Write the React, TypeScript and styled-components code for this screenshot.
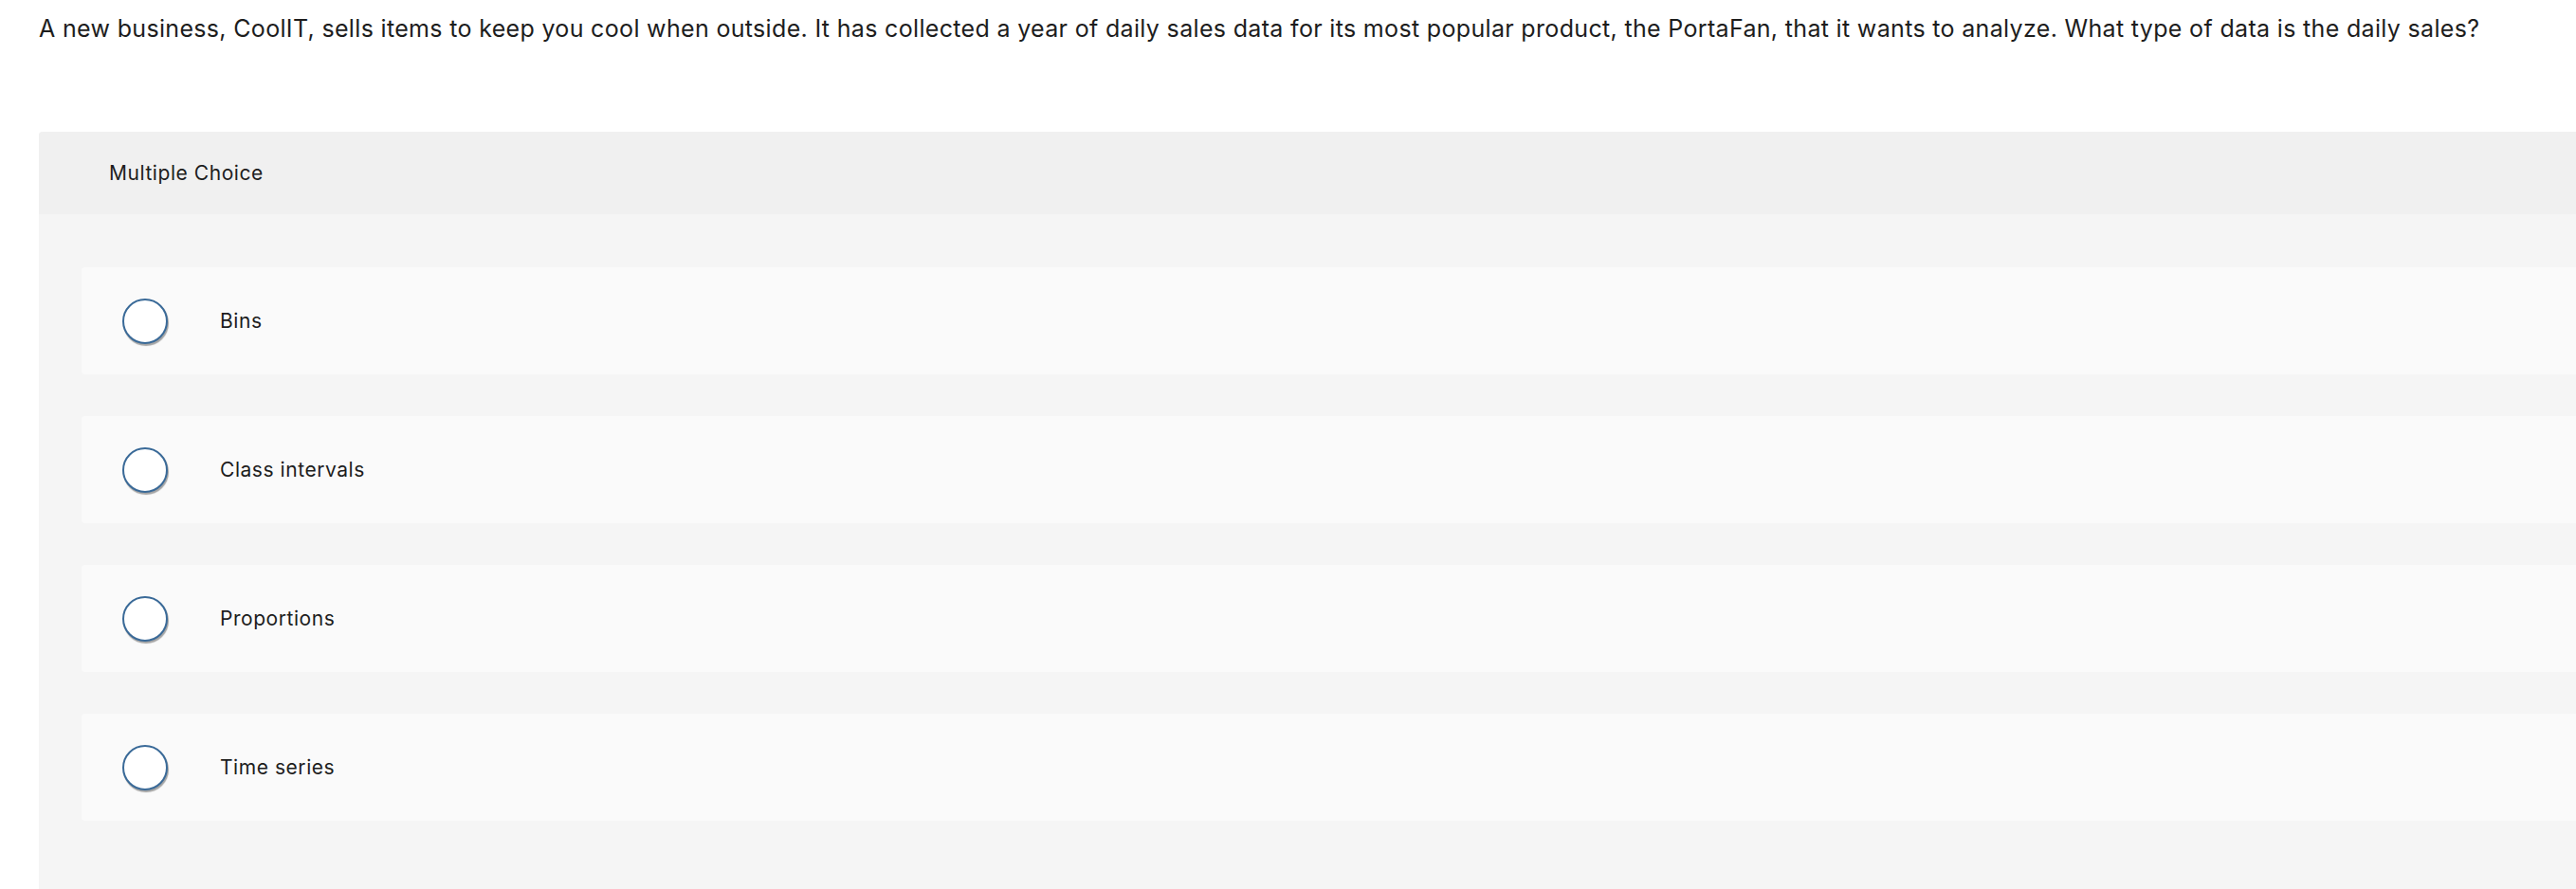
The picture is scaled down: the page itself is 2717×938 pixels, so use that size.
import React from 'react'
import styled, { createGlobalStyle } from 'styled-components'

const GlobalStyle = createGlobalStyle`
  html, body {
    margin: 0;
    padding: 0;
    background: #ffffff;
    overflow: hidden;
  }

  body {
    font-family: Inter, 'Open Sans', 'Liberation Sans', sans-serif;
    color: #1d1d1d;
  }
`

const Page = styled.main`
  padding: 12px 0 0 41px;
  height: 938px;
  box-sizing: border-box;
`

const Question = styled.p`
  margin: 0;
  font-size: 25px;
  letter-spacing: 0.33px;
  line-height: 36px;
  white-space: nowrap;
`

const Panel = styled.section`
  margin-top: 91px;
  width: 2760px;
  border-radius: 4px 0 0 0;
  background: #f5f5f5;
  overflow: hidden;
`

const PanelHeader = styled.header`
  height: 87px;
  display: flex;
  align-items: center;
  padding-left: 74px;

  background: #f0f0f0;
  font-size: 21px;
  letter-spacing: 0.55px;
`

const OptionsList = styled.div`
  display: flex;
  flex-direction: column;
  gap: 44px;
  padding: 56px 0 100px 45px;
`

const Option = styled.label`
  height: 113px;
  display: flex;
  align-items: center;

  padding-left: 43px;
  border-radius: 4px;
  background: #fafafa;

  cursor: pointer;
`

const Radio = styled.span`
  width: 48px;
  height: 48px;
  flex-shrink: 0;
  box-sizing: border-box;

  border: 2px solid #3a6a98;
  border-radius: 50%;
  background: #ffffff;
  box-shadow: 1px 2px 1px rgba(0, 0, 0, 0.35);
`

const OptionText = styled.span`
  margin-left: 55px;
  font-size: 21px;
  letter-spacing: 0.55px;
`

const options = ['Bins', 'Class intervals', 'Proportions', 'Time series']

export default function App() {
  return (
    <>
      <GlobalStyle />
      <Page>
        <Question>
          A new business, CoolIT, sells items to keep you cool when outside. It has
          collected a year of daily sales data for its most popular product, the
          PortaFan, that it wants to analyze. What type of data is the daily sales?
        </Question>

        <Panel>
          <PanelHeader>Multiple Choice</PanelHeader>
          <OptionsList>
            {options.map((text) => (
              <Option key={text}>
                <Radio />
                <OptionText>{text}</OptionText>
              </Option>
            ))}
          </OptionsList>
        </Panel>
      </Page>
    </>
  )
}
